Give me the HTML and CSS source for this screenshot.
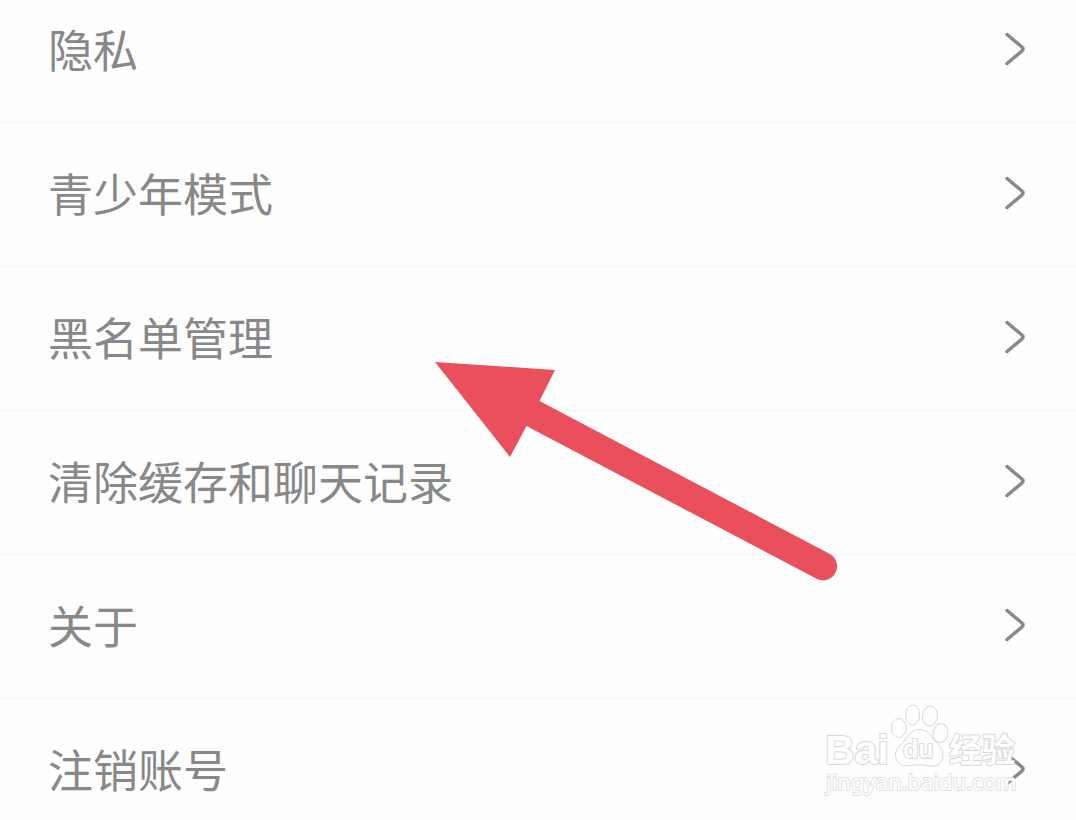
FILE: index.html
```html
<!DOCTYPE html>
<html lang="zh-CN">
<head>
    <meta charset="UTF-8">
    <meta name="viewport" content="width=device-width, initial-scale=1.0">
    <title>设置</title>
    <link rel="stylesheet" href="styles.css">
</head>
<body>
    <main class="settings">
        <ul class="menu">
            <li><a class="menu-item" href="#privacy">隐私
                <svg class="chevron" viewBox="0 0 24 36"><path d="M4 3.500 L19 16 Q21 18 19 20 L4 32.500"/></svg></a></li>
            <li><a class="menu-item" href="#teen">青少年模式
                <svg class="chevron" viewBox="0 0 24 36"><path d="M4 3.500 L19 16 Q21 18 19 20 L4 32.500"/></svg></a></li>
            <li><a class="menu-item" href="#blacklist">黑名单管理
                <svg class="chevron" viewBox="0 0 24 36"><path d="M4 3.500 L19 16 Q21 18 19 20 L4 32.500"/></svg></a></li>
            <li><a class="menu-item" href="#clear">清除缓存和聊天记录
                <svg class="chevron" viewBox="0 0 24 36"><path d="M4 3.500 L19 16 Q21 18 19 20 L4 32.500"/></svg></a></li>
            <li><a class="menu-item" href="#about">关于
                <svg class="chevron" viewBox="0 0 24 36"><path d="M4 3.500 L19 16 Q21 18 19 20 L4 32.500"/></svg></a></li>
            <li><a class="menu-item" href="#close">注销账号
                <svg class="chevron" viewBox="0 0 24 36"><path d="M4 3.500 L19 16 Q21 18 19 20 L4 32.500"/></svg></a></li>
        </ul>

        <!-- 指向黑名单管理的箭头 -->
        <svg class="arrow" viewBox="0 0 404 220" aria-hidden="true">
            <path d="M1 1 L121 9 L105.500 40 L395 192.500 A13.500 13.500 0 0 1 383 218 L92.500 65 L76 96 Z"/>
        </svg>

        <!-- 水印 -->
        <svg class="watermark" viewBox="0 0 200 100">
            <text class="mark-brand" x="1" y="60">Bai</text>
            <ellipse cx="75" cy="24" rx="7.500" ry="9.500"/>
            <ellipse cx="88.500" cy="11" rx="7" ry="10"/>
            <ellipse cx="106" cy="12" rx="7.500" ry="10" transform="rotate(8 106 12)"/>
            <ellipse cx="116.500" cy="29" rx="7.500" ry="9.500" transform="rotate(8 116.500 29)"/>
            <path d="M95 25.500 C103 25.500 107 31 110 36 C114 41 119 44 119 51 C119 59 113 63 106 62 C99 60.500 92 60.500 85 61.500 C77 63 71 58 71.500 50 C72 44 77 41 81 36 C84 31 88 25.500 95 25.500 Z"/>
            <text class="mark-du" x="79" y="54">du</text>
            <text class="mark-cn" x="125" y="58">经验</text>
            <text class="mark-url" x="2" y="86">jingyan.baidu.com</text>
        </svg>
    </main>
</body>
</html>
```
FILE: styles.css
```css
body {
    margin: 0;
    background-color: #fefefe;
    color: #888;
    font-family: "Noto Sans CJK SC", sans-serif;
}
.settings {
    position: relative;
    overflow: hidden;
}
.menu {
    margin: 0;
    padding: 0;
    list-style: none;
}
.menu-item {
    display: flex;
    align-items: center;
    justify-content: space-between;
    padding: 39px 49px 42px 48px;
    border-bottom: 3px solid #f9f9f9;
    color: inherit;
    font-size: 45px;
    line-height: 60px;
    text-decoration: none;
}
/* 首尾两行贴着屏幕边缘 */
.menu li:first-child .menu-item {
    padding-top: 19px;
}
.menu li:last-child .menu-item {
    padding-bottom: 21px;
    border-bottom: none;
}
.chevron {
    width: 24px;
    height: 36px;
    fill: none;
    stroke: #888;
    stroke-width: 3.5;
    stroke-linecap: round;
}
.arrow {
    position: absolute;
    top: 361px;
    left: 434px;
    width: 404px;
    height: 220px;
    fill: #ea505b;
}
.watermark {
    position: absolute;
    top: 704px;
    right: 52px;
    width: 200px;
    height: 100px;
    fill: #fefefe;
    stroke: #d8d8d8;
    stroke-width: 1;
}
.watermark text {
    stroke-width: 2;
    stroke-linejoin: round;
    paint-order: stroke;
}
.mark-brand {
    font: bold 41px "Liberation Sans", sans-serif;
}
.mark-du {
    font: bold 25px "Liberation Sans", sans-serif;
}
.mark-cn {
    font: bold 33px "Noto Sans CJK SC", sans-serif;
}
.mark-url {
    font: 22px "Noto Sans", sans-serif;
    stroke: #e2e2e2;
}
```
